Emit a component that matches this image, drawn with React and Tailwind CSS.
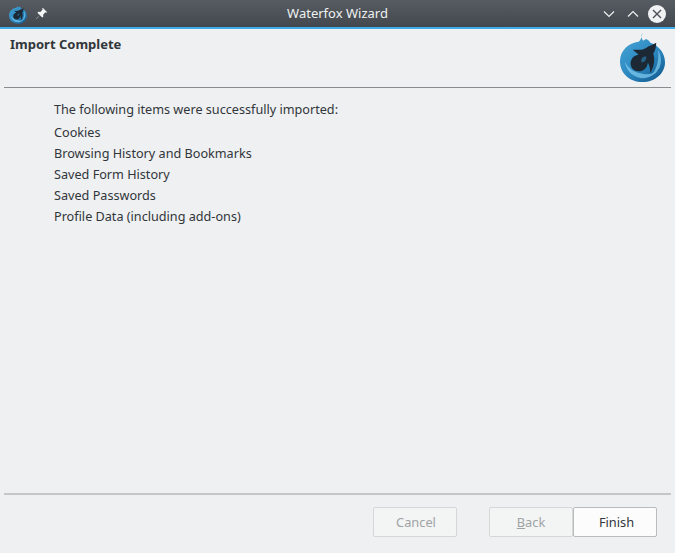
import { useId } from 'react';

const items = ['Cookies', 'Browsing History and Bookmarks', 'Saved Form History', 'Saved Passwords', 'Profile Data (including add-ons)'];

// Waterfox globe with the dark swoosh
function Logo({ className }) {
  const id = useId();
  return (
    <svg viewBox="0 0 46 50" className={className}>
      <defs>
        <linearGradient id={id} x1="0.1" y1="0.1" x2="0.8" y2="1">
          <stop offset="0" stopColor="#44a3d6" />
          <stop offset="0.6" stopColor="#2a85bd" />
          <stop offset="1" stopColor="#145f94" />
        </linearGradient>
      </defs>
      <path d="M23 0 C21 3 22 6 24 8 C26 5 29 6 31 10 C40 13 46 21 46 30 C46 41 36 50 23 50 C10 50 0 41 0 29 C0 18 9 10 19 9 C22 7 22 3 23 0Z" fill={`url(#${id})`} />
      <path d="M5 29 C6 40 16 47 26 46 C31 45 36 42 39 38 C34 42 27 43 21 41 C13 40 8 35 5 29Z" fill="#7cc8ec" opacity="0.75" />
      <path d="M39 17 C42 22 43 30 40 36 C38 39 36 41 33 42 C38 36 40 27 39 17Z" fill="#7cc8ec" opacity="0.75" />
      <path d="M13 17 C18 17 23 18 27 15 C30 13 34 12 37 10 C37 15 36 18 34 21 C36 27 35 34 31 41 C31 36 30 33 28.5 30 C28 36 24 39 19 39 C13 39 10 34 11 29 C12 25 15 23 19 22 C17 20 15 19 13 17Z" fill="#1c2935" />
      <path d="M27 24 C27 28 25 30 22 30 C21 26 23 24 27 24Z" fill="#2c86be" opacity="0.6" />
    </svg>
  );
}

export default function App() {
  return (
    <div className="w-[675px] h-[553px] flex flex-col overflow-hidden bg-[#eff0f1] text-[#31363b] text-[12.65px] font-['Noto_Sans',sans-serif]">
      {/* Title bar */}
      <div className="h-[29px] shrink-0 flex items-center bg-gradient-to-b from-[#565c62] to-[#42484d] border-b-2 border-[#3daee9] text-[#eff0f1]">
        <div className="flex items-center pl-[9px] gap-[8px] w-[85px]">
          <Logo className="w-[18px] h-[20px]" />
          <svg viewBox="0 0 16 16" className="w-[13px] h-[13px]" fill="#f5f6f7">
            <path d="M9.5 1 L15 6.5 L13.8 7.2 L12.8 6.6 L10 9.4 L10.2 12 L9 13 L6 10 L2 14.5 L1.5 14 L6 10 L3 7 L4 5.8 L6.6 6 L9.4 3.2 L8.8 2.2Z" />
          </svg>
        </div>
        <div className="flex-1 text-center text-[13px]">Waterfox Wizard</div>
        <div className="flex items-center w-[85px] pl-[13px] gap-[12px]">
          <svg viewBox="0 0 12 8" className="w-[12px] h-[8px]" fill="none" stroke="#eff0f1" strokeWidth="1.2"><path d="M1 1.5 L6 6.5 L11 1.5" /></svg>
          <svg viewBox="0 0 12 8" className="w-[12px] h-[8px]" fill="none" stroke="#eff0f1" strokeWidth="1.2"><path d="M1 6.5 L6 1.5 L11 6.5" /></svg>
          <div className="w-[18px] h-[18px] -ml-[3px] rounded-full bg-[#f1f2f3] flex items-center justify-center">
            <svg viewBox="0 0 10 10" className="w-[10px] h-[10px]" fill="none" stroke="#4a5055" strokeWidth="1.4"><path d="M1 1 L9 9 M9 1 L1 9" /></svg>
          </div>
        </div>
      </div>

      {/* Header */}
      <div className="h-[59px] shrink-0 mx-[4px] flex justify-between border-b border-[#8a8d90]">
        <div className="pl-[6px] pt-[7px] font-bold text-[13px] leading-[17px]">Import Complete</div>
        <Logo className="w-[45px] h-[49px] mt-[4px] mr-[6px]" />
      </div>

      {/* Content */}
      <div className="flex-1 pl-[54px] pt-[11px] leading-[21px]">
        <div className="mb-[2px]">The following items were successfully imported:</div>
        {items.map((item) => (
          <div key={item}>{item}</div>
        ))}
      </div>

      {/* Footer */}
      <div className="h-[60px] shrink-0 mx-[4px] border-t-2 border-[#c4c6c8] flex justify-end items-start pt-[12px] pr-[14px]">
        <button className="w-[84px] h-[30px] pt-[1px] pl-[2px] rounded-[2px] border border-[#d5d7d8] bg-[#f3f4f4] text-[12.8px] text-[#a0a3a5]">Cancel</button>
        <button className="w-[84px] h-[30px] pt-[1px] ml-[32px] rounded-[2px] border border-[#d5d7d8] bg-[#f3f4f4] text-[12.8px] text-[#a0a3a5]"><span className="underline">B</span>ack</button>
        <button className="w-[84px] h-[30px] pt-[1px] pl-[3px] rounded-[2px] border border-[#b9bbbd] bg-[#fcfcfc] text-[12.8px] text-[#31363b]">Finish</button>
      </div>
    </div>
  );
}
